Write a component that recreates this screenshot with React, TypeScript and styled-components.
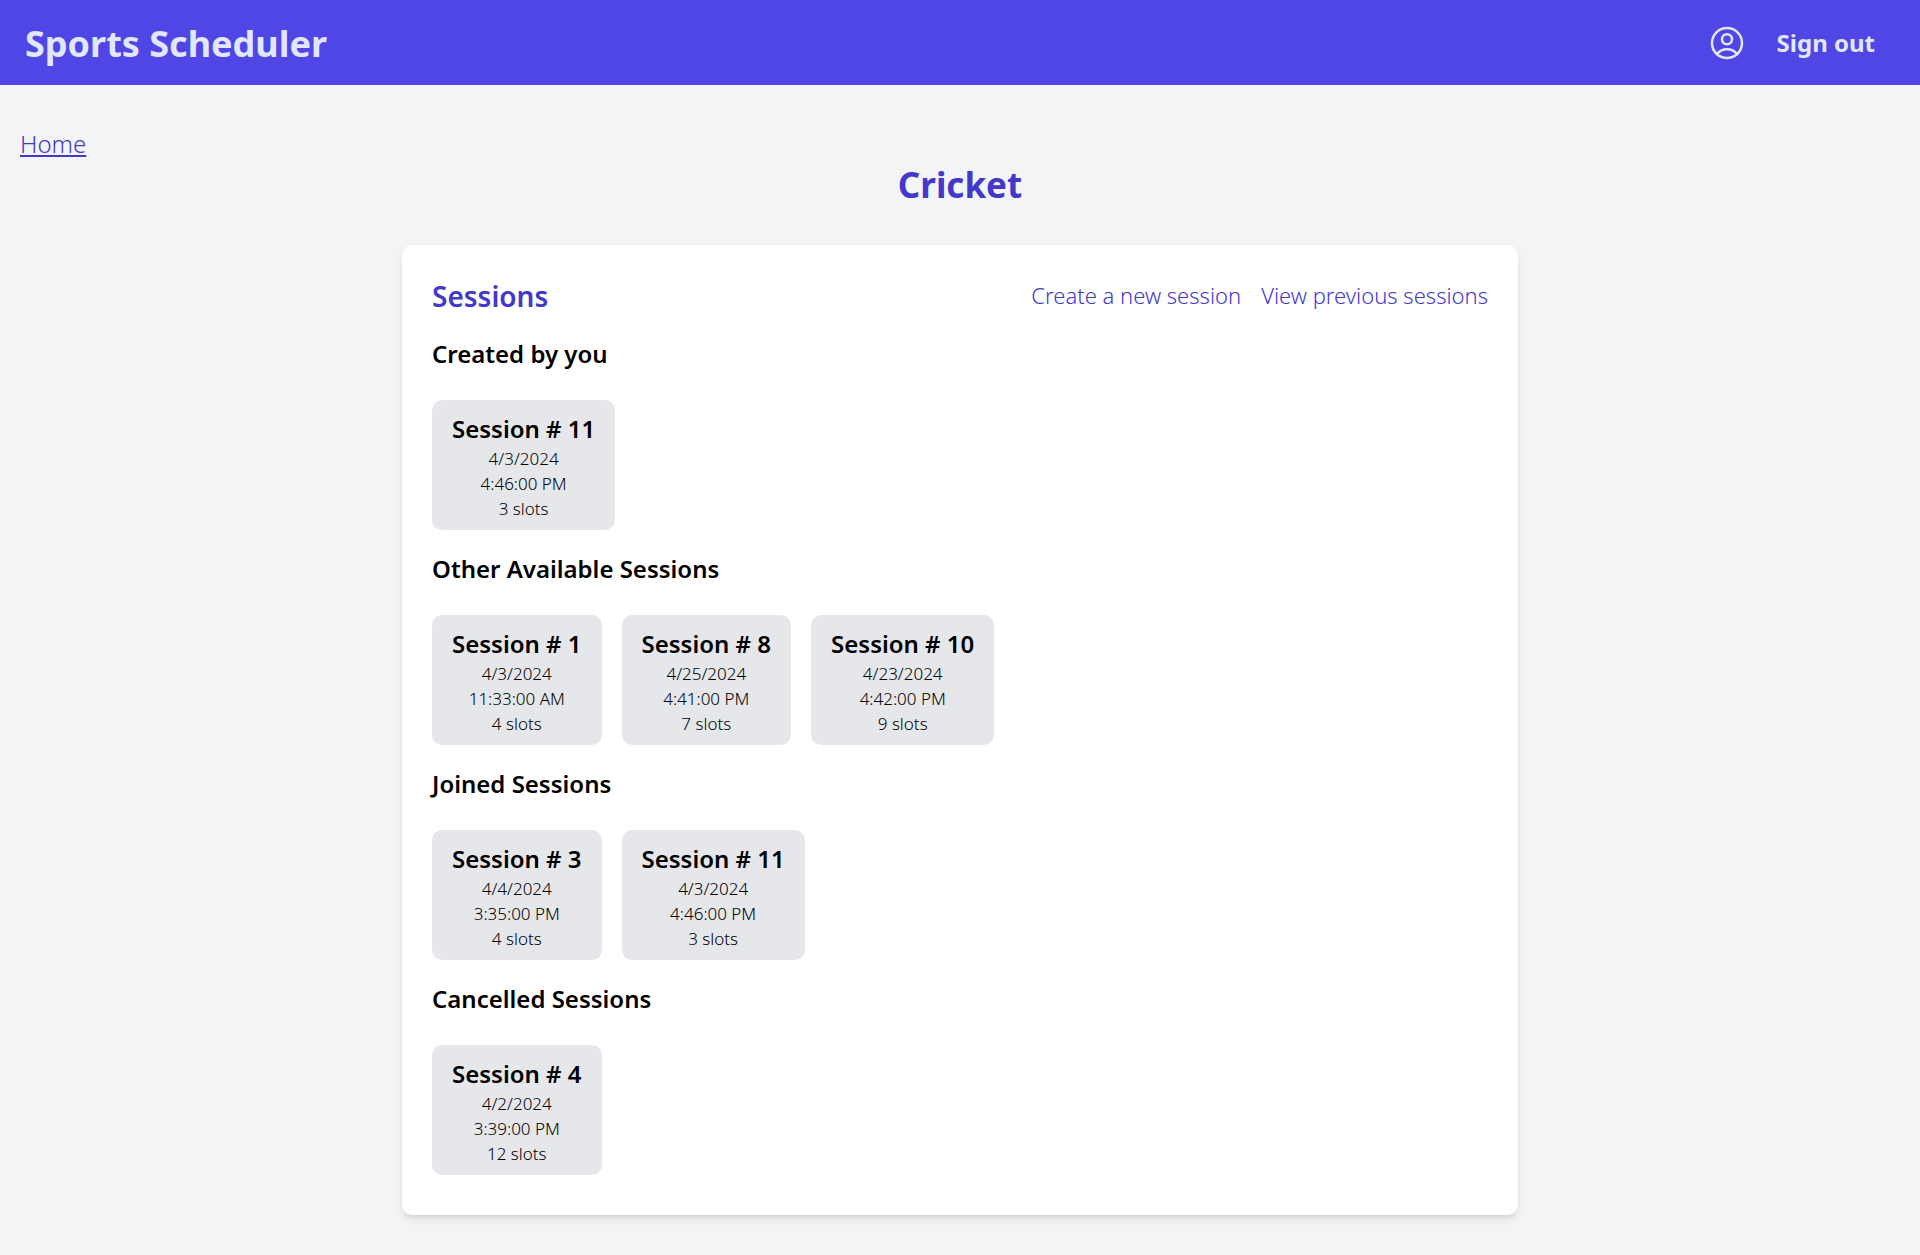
import React from "react";
import styled, { createGlobalStyle } from "styled-components";

const GlobalStyle = createGlobalStyle`
  *, *::before, *::after { box-sizing: border-box; }
  body {
    margin: 0;
    background: #f3f4f6;
    color: #000;
    font-family: "Noto Sans", "Open Sans", sans-serif;
    font-weight: 300;
  }
  h1, h2, h3, h4, p { margin: 0; }
  a { color: inherit; text-decoration: none; }
`;

const NavBar = styled.header`
  display: flex;
  align-items: flex-start;
  justify-content: space-between;
  padding: 20px 45px 17px 25px;
  background: #4f46e5;
  color: #e0e7ff;
`;

const Brand = styled.a`
  font-size: 36px;
  line-height: 48px;
  font-weight: 700;
`;

const NavActions = styled.nav`
  display: flex;
  align-items: center;
  gap: 30px;
  height: 45px;
`;

const IconLink = styled.a`
  display: flex;
`;

const SignOut = styled.a`
  font-size: 24px;
  line-height: 35px;
  font-weight: 700;
`;

const Page = styled.main`
  padding: 40px 30px;
`;

const Breadcrumb = styled.nav`
  margin-left: -10px;
  font-size: 24px;
  line-height: 37px;
  color: #4338ca;

  a { text-decoration: underline; }
`;

const SportTitle = styled.h1`
  font-size: 35px;
  line-height: 45px;
  font-weight: 700;
  text-align: center;
  color: #4338ca;
`;

const Panel = styled.section`
  width: 60%;
  margin: 38px auto 0;
  padding: 30px;
  border-radius: 10px;
  background: #fff;
  box-shadow: 0 5px 8px -1px rgba(0, 0, 0, 0.1), 0 3px 5px -3px rgba(0, 0, 0, 0.1);
`;

const PanelHeader = styled.div`
  display: flex;
  align-items: flex-start;
  justify-content: space-between;
  margin-bottom: 18px;
  color: #4338ca;
`;

const PanelTitle = styled.h2`
  font-size: 28px;
  line-height: 42px;
  font-weight: 600;
`;

const PanelLinks = styled.div`
  display: flex;
  gap: 20px;
  font-size: 22px;
  line-height: 40px;
`;

const Groups = styled.div`
  display: grid;
  gap: 10px;
`;

const GroupTitle = styled.h3`
  margin-bottom: 18px;
  font-size: 24px;
  line-height: 37px;
  font-weight: 600;
`;

const CardRow = styled.div`
  display: flex;
  flex-wrap: wrap;
  gap: 20px;
  padding: 10px 0;
`;

const Card = styled.a`
  padding: 11px 20px 9px;
  border-radius: 10px;
  background: #e5e7eb;
  text-align: center;
`;

const CardTitle = styled.h4`
  font-size: 24px;
  line-height: 35px;
  font-weight: 600;
`;

const CardLine = styled.p`
  font-size: 17px;
  line-height: 25px;
`;

type Session = { id: number; date: string; time: string; slots: number };

const groups: { title: string; sessions: Session[] }[] = [
  {
    title: "Created by you",
    sessions: [{ id: 11, date: "4/3/2024", time: "4:46:00 PM", slots: 3 }],
  },
  {
    title: "Other Available Sessions",
    sessions: [
      { id: 1, date: "4/3/2024", time: "11:33:00 AM", slots: 4 },
      { id: 8, date: "4/25/2024", time: "4:41:00 PM", slots: 7 },
      { id: 10, date: "4/23/2024", time: "4:42:00 PM", slots: 9 },
    ],
  },
  {
    title: "Joined Sessions",
    sessions: [
      { id: 3, date: "4/4/2024", time: "3:35:00 PM", slots: 4 },
      { id: 11, date: "4/3/2024", time: "4:46:00 PM", slots: 3 },
    ],
  },
  {
    title: "Cancelled Sessions",
    sessions: [{ id: 4, date: "4/2/2024", time: "3:39:00 PM", slots: 12 }],
  },
];

function UserIcon() {
  return (
    <svg width="40" height="40" viewBox="0 0 24 24" fill="none" stroke="currentColor" strokeWidth="1.5" strokeLinecap="round" strokeLinejoin="round" aria-hidden="true">
      <path d="M17.982 18.725A7.488 7.488 0 0 0 12 15.75a7.488 7.488 0 0 0-5.982 2.975m11.963 0a9 9 0 1 0-11.963 0m11.963 0A8.966 8.966 0 0 1 12 21a8.966 8.966 0 0 1-5.982-2.275M15 9.75a3 3 0 1 1-6 0 3 3 0 0 1 6 0Z" />
    </svg>
  );
}

function SessionCard({ session }: { session: Session }) {
  return (
    <Card href="#">
      <CardTitle>{`Session # ${session.id}`}</CardTitle>
      <CardLine>{session.date}</CardLine>
      <CardLine>{session.time}</CardLine>
      <CardLine>{`${session.slots} slots`}</CardLine>
    </Card>
  );
}

export default function App() {
  return (
    <>
      <GlobalStyle />
      <NavBar>
        <Brand href="#">Sports Scheduler</Brand>
        <NavActions>
          <IconLink href="#">
            <UserIcon />
          </IconLink>
          <SignOut href="#">Sign out</SignOut>
        </NavActions>
      </NavBar>
      <Page>
        <Breadcrumb>
          <a href="#">Home</a>
        </Breadcrumb>
        <SportTitle>Cricket</SportTitle>
        <Panel>
          <PanelHeader>
            <PanelTitle>Sessions</PanelTitle>
            <PanelLinks>
              <a href="#">Create a new session</a>
              <a href="#">View previous sessions</a>
            </PanelLinks>
          </PanelHeader>
          <Groups>
            {groups.map((group) => (
              <section key={group.title}>
                <GroupTitle>{group.title}</GroupTitle>
                <CardRow>
                  {group.sessions.map((session) => (
                    <SessionCard key={session.id} session={session} />
                  ))}
                </CardRow>
              </section>
            ))}
          </Groups>
        </Panel>
      </Page>
    </>
  );
}
